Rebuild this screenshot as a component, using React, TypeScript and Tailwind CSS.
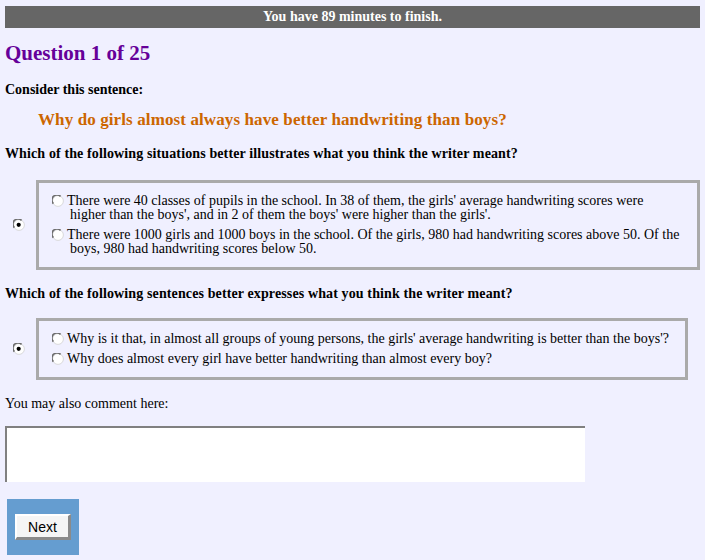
import React, { useState } from 'react';

type Group = {
  prompt: string;
  options: string[];
};

const GROUPS: Group[] = [
  {
    prompt: 'Which of the following situations better illustrates what you think the writer meant?',
    options: [
      "There were 40 classes of pupils in the school. In 38 of them, the girls' average handwriting scores were higher than the boys', and in 2 of them the boys' were higher than the girls'.",
      'There were 1000 girls and 1000 boys in the school. Of the girls, 980 had handwriting scores above 50. Of the boys, 980 had handwriting scores below 50.',
    ],
  },
  {
    prompt: 'Which of the following sentences better expresses what you think the writer meant?',
    options: [
      "Why is it that, in almost all groups of young persons, the girls' average handwriting is better than the boys'?",
      'Why does almost every girl have better handwriting than almost every boy?',
    ],
  },
];

// old-school radio, drawn so it looks the same everywhere
const Radio: React.FC<{ checked?: boolean; onClick?: () => void }> = ({ checked, onClick }) => (
  <svg width="12" height="12" viewBox="0 0 12 12" className="shrink-0 block cursor-pointer" onClick={onClick}>
    <circle cx="6" cy="6" r="5.4" fill="#fff" stroke="#d0d0d0" strokeWidth="0.8" />
    <path d="M1.4 8.6 A5 5 0 0 1 8.6 1.4" stroke="#6e6e6e" strokeWidth="1.6" fill="none" />
    {checked && <circle cx="5.7" cy="5.8" r="2.1" fill="#000" />}
  </svg>
);

const ChoiceBox: React.FC<{ options: string[] }> = ({ options }) => {
  const [picked, setPicked] = useState<number | null>(null);

  return (
    <div className="flex items-center">
      {/* the unanswered radio sitting outside the box */}
      <div className="ml-[8px]">
        <Radio checked={picked === null} onClick={() => setPicked(null)} />
      </div>
      <div className="ml-[11px] border-[3px] border-[#aaaaaa] pl-[13px] pr-[16px] py-[11px] flex flex-col gap-[6px]">
        {options.map((text, i) => (
          <div key={i} className="flex items-start">
            <div className="mt-[1px]">
              <Radio checked={picked === i} onClick={() => setPicked(i)} />
            </div>
            <p className="ml-[6px] text-[14px] leading-[14px] indent-[-3px]">{text}</p>
          </div>
        ))}
      </div>
    </div>
  );
};

export default function App() {
  const [comment, setComment] = useState('');

  return (
    <div className="min-h-screen bg-[#f0f0ff] px-[5px] text-black font-['Liberation_Serif',serif]">
      <div className="flex flex-col pt-[6px]">
        <div className="h-[22px] bg-[#666666] flex items-center justify-center text-white text-[14px] font-bold leading-none">
          You have 89 minutes to finish.
        </div>

        <h2 className="mt-[15px] text-[21px] leading-[21px] font-bold text-[#660099]">Question 1 of 25</h2>

        <p className="mt-[18px] text-[14px] leading-[16px] font-bold">Consider this sentence:</p>

        <p className="mt-[12px] ml-[33px] text-[17px] leading-[20px] font-bold text-[#cc6600] tracking-[0.11px]">
          Why do girls almost always have better handwriting than boys?
        </p>

        <p className="mt-[16px] text-[14px] leading-[16px] font-bold tracking-[0.12px]">{GROUPS[0].prompt}</p>
        <div className="mt-[18px]">
          <ChoiceBox options={GROUPS[0].options} />
        </div>

        <p className="mt-[16px] text-[14px] leading-[16px] font-bold tracking-[0.12px]">{GROUPS[1].prompt}</p>
        <div className="mt-[16px]">
          <ChoiceBox options={GROUPS[1].options} />
        </div>

        <p className="mt-[16px] text-[14px] leading-[16px]">You may also comment here:</p>

        <textarea
          value={comment}
          onChange={e => setComment(e.target.value)}
          className="mt-[14px] block w-[580px] h-[56px] bg-white border-t-2 border-l-2 border-r-0 border-b-0 border-[#808080] resize-none outline-none text-[14px] p-[2px]"
        />

        <div className="mt-[17px] ml-[2px] w-[72px] h-[56px] bg-[#659dd0] pt-[15px] pl-[8px]">
          <button className="w-[56px] h-[26px] bg-[#f5f5f5] border-t-2 border-l-2 border-white border-r-[3px] border-b-[3px] border-r-[#8a8a8a] border-b-[#8a8a8a] flex items-center justify-center text-[14px] leading-none font-['Liberation_Sans',sans-serif] text-black">
            Next
          </button>
        </div>
      </div>
    </div>
  );
}
